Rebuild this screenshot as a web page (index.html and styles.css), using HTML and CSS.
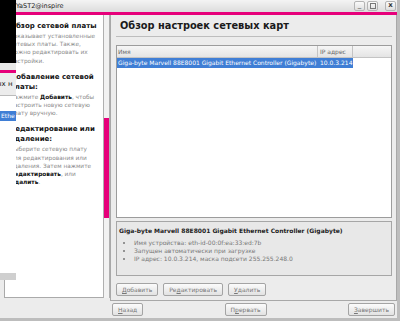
FILE: index.html
```html
<!DOCTYPE html>
<html lang="ru">
<head>
    <meta charset="UTF-8">
    <meta name="viewport" content="width=device-width, initial-scale=1.0">
    <title>YaST2@inspire</title>
    <link rel="stylesheet" href="styles.css">
</head>
<body>
    <div class="desktop">
        <div class="window">
            <div class="titlebar">
                <span class="title">YaST2@inspire</span>
                <div class="wm-buttons">
                    <span class="wm-btn">_</span>
                    <span class="wm-btn"><span class="max-box"></span></span>
                    <span class="wm-btn close">x</span>
                </div>
            </div>
            <div class="accent"></div>
            <div class="client">
                <aside class="help">
                    <div class="help-text">
                        <h2>Обзор сетевой платы</h2>
                        <p>показывает установленные сетевых платы. Также, можно редактировать их настройки.</p>
                        <h2>Добавление сетевой платы:</h2>
                        <p>Нажмите <b>Добавить</b>, чтобы настроить новую сетевую плату вручную.</p>
                        <h2>Редактирование или удаление:</h2>
                        <p>Выберите сетевую плату для редактирования или удаления. Затем нажмите <b>Редактировать</b>, или <b>Удалить</b>.</p>
                    </div>
                    <div class="help-scroll"><div class="thumb"></div></div>
                </aside>
                <main class="content">
                    <div class="frame">
                        <h1>Обзор настроек сетевых карт</h1>
                        <div class="table">
                            <div class="thead">
                                <span class="col-name">Имя</span>
                                <span class="col-ip">IP адрес</span>
                                <span class="col-rest"></span>
                            </div>
                            <div class="row selected">
                                <span class="col-name">Giga-byte Marvell 88E8001 Gigabit Ethernet Controller (Gigabyte)</span>
                                <span class="col-ip">10.0.3.214</span>
                            </div>
                        </div>
                        <div class="details">
                            <div class="details-title">Giga-byte Marvell 88E8001 Gigabit Ethernet Controller (Gigabyte)</div>
                            <ul>
                                <li>Имя устройства: eth-id-00:0f:ea:33:ed:7b</li>
                                <li>Запущен автоматически при загрузке</li>
                                <li>IP адрес: 10.0.3.214, маска подсети 255.255.248.0</li>
                            </ul>
                        </div>
                        <div class="actions">
                            <button class="btn"><u>Д</u>обавить</button>
                            <button class="btn">Ре<u>д</u>актировать</button>
                            <button class="btn"><u>У</u>далить</button>
                        </div>
                    </div>
                    <div class="nav">
                        <button class="btn nav-btn"><u>Н</u>азад</button>
                        <button class="btn nav-btn">П<u>р</u>ервать</button>
                        <button class="btn nav-btn"><u>З</u>авершить</button>
                    </div>
                </main>
            </div>
        </div>

        <div class="other-window">
            <div class="ow-top"></div>
            <div class="ow-accent"></div>
            <div class="ow-tab">ых н</div>
            <div class="ow-list">
                <div class="ow-item">Ethe</div>
            </div>
            <div class="ow-ledge"></div>
        </div>
    </div>
</body>
</html>
```

FILE: styles.css
```css
body {
    margin: 0;
    padding: 0;
    font-family: "DejaVu Sans", Verdana, sans-serif;
    background-color: #d6d6d6;
    overflow: hidden;
}

.desktop {
    position: relative;
    width: 400px;
    height: 321px;
}

.window {
    width: 397px;
    height: 318px;
    background-color: #ececec;
    border-right: 3px solid #bdbdbd;
    border-bottom: 3px solid #bdbdbd;
    display: flex;
    flex-direction: column;
}

.titlebar {
    height: 12px;
    background: linear-gradient(#f4f4f4, #dcdcdc);
    display: flex;
    align-items: center;
    justify-content: space-between;
}

.title {
    font-size: 6.5px;
    color: #222;
    padding-left: 16px;
}

.wm-buttons {
    display: flex;
    gap: 2px;
    padding-right: 1px;
}

.wm-btn {
    width: 9px;
    height: 8px;
    border: 1px solid #b4b4b4;
    border-radius: 2px;
    background: linear-gradient(#fafafa, #dedede);
    font-size: 7px;
    line-height: 6px;
    color: #555;
    display: flex;
    justify-content: center;
    align-items: flex-start;
}

.wm-btn.close {
    margin-left: 5px;
    font-weight: bold;
    color: #333;
    line-height: 7px;
}

.max-box {
    width: 4px;
    height: 4px;
    margin-top: 1px;
    border: 1px solid #777;
}

.accent {
    height: 3px;
    background-color: #e6007a;
}

.client {
    flex: 1;
    display: flex;
    min-height: 0;
}

/* help panel */
.help {
    width: 110px;
    display: flex;
    padding-left: 4px;
    padding-bottom: 20px;
    box-sizing: border-box;
}

.help-text {
    flex: 1;
    background-color: #fff;
    border-left: 1px solid #aaa;
    border-bottom: 1px solid #aaa;
    padding: 6px 0 0 5px;
    overflow: hidden;
    color: #8a8a8a;
    font-size: 5.8px;
    line-height: 8.2px;
}

.help-text h2 {
    margin: 0;
    width: 92px;
    font-size: 7px;
    line-height: 10px;
    color: #111;
}

.help-text p {
    margin: 1px 0 7px;
    width: 88px;
}

.help-text b {
    color: #111;
}

.help-scroll {
    width: 5px;
    border-left: 1px solid #b0b0b0;
    border-right: 1px solid #b0b0b0;
    background-color: #f2f2f2;
    display: flex;
    flex-direction: column;
}

.thumb {
    margin-top: 103px;
    height: 100px;
    background-color: #e6007a;
}

/* main area */
.content {
    flex: 1;
    display: flex;
    flex-direction: column;
}

.frame {
    flex: 1;
    border-left: 1px solid #a8a8a8;
    border-right: 1px solid #a8a8a8;
    border-bottom: 1px solid #a8a8a8;
    padding: 0 4px 4px 5px;
    display: flex;
    flex-direction: column;
}

h1 {
    margin: 0;
    padding: 5px 0 4px 4px;
    font-size: 9.8px;
    line-height: 12px;
    color: #1a1a1a;
    border-bottom: 1px solid #bdbdbd;
}

.table {
    margin-top: 8px;
    height: 173px;
    box-sizing: border-box;
    background-color: #fff;
    border: 1px solid #9c9c9c;
    font-size: 6px;
}

.thead {
    display: flex;
    height: 11px;
    background: linear-gradient(#f6f6f6, #e4e4e4);
    border-bottom: 1px solid #c4c4c4;
    color: #666;
    line-height: 11px;
}

.thead span {
    border-right: 1px solid #c4c4c4;
}

.thead .col-rest {
    border-right: none;
}

.col-name {
    width: 201px;
    padding-left: 1px;
    box-sizing: border-box;
    white-space: nowrap;
    overflow: hidden;
}

.col-ip {
    width: 35px;
    padding-left: 2px;
    box-sizing: border-box;
    white-space: nowrap;
}

.row {
    display: flex;
    height: 10px;
    line-height: 10px;
}

.row.selected {
    width: 236px;
    background-color: #3f7ed5;
    color: #fff;
}

.details {
    margin-top: 3px;
    height: 55px;
    box-sizing: border-box;
    border: 1px solid #a6a6a6;
    background-color: #e8e8e8;
    padding: 5px 2px;
}

.details-title {
    font-size: 6px;
    font-weight: bold;
    color: #222;
    white-space: nowrap;
}

.details ul {
    margin: 5px 0 0;
    padding-left: 15px;
    font-size: 6px;
    line-height: 8px;
    color: #777;
    list-style: disc;
}

.actions {
    display: flex;
    gap: 5px;
    margin-top: 7px;
}

.btn {
    font-family: "DejaVu Sans", Verdana, sans-serif;
    font-size: 6px;
    color: #777;
    height: 13px;
    padding: 0 5px;
    border: 1px solid #a4a4a4;
    border-radius: 2px;
    background: linear-gradient(#fbfbfb, #e2e2e2);
}

.nav {
    height: 21px;
    display: flex;
    justify-content: space-between;
    align-items: center;
    padding: 0 2px;
}

.nav-btn {
    min-width: 31px;
}

/* overlapping window at the left edge */
.other-window {
    position: absolute;
    left: 0;
    top: 0;
    width: 16px;
    height: 280px;
    background-color: #fff;
    display: flex;
    flex-direction: column;
    overflow: hidden;
}

.ow-top {
    height: 63px;
    background-color: #000;
}

.ow-accent {
    height: 10px;
    background: linear-gradient(#e8e8e8 0, #e8e8e8 7px, #e6007a 7px);
}

.ow-tab {
    height: 22px;
    background-color: #ececec;
    border-bottom: 1px solid #bbb;
    font-size: 7px;
    line-height: 22px;
    color: #111;
    white-space: nowrap;
    text-indent: -4px;
}

.ow-list {
    flex: 1;
    padding-top: 15px;
}

.ow-item {
    height: 10px;
    background-color: #3f7ed5;
    color: #fff;
    font-size: 6px;
    line-height: 10px;
    padding-left: 1px;
}

.ow-ledge {
    height: 7px;
    background-color: #cfcfcf;
}
```
